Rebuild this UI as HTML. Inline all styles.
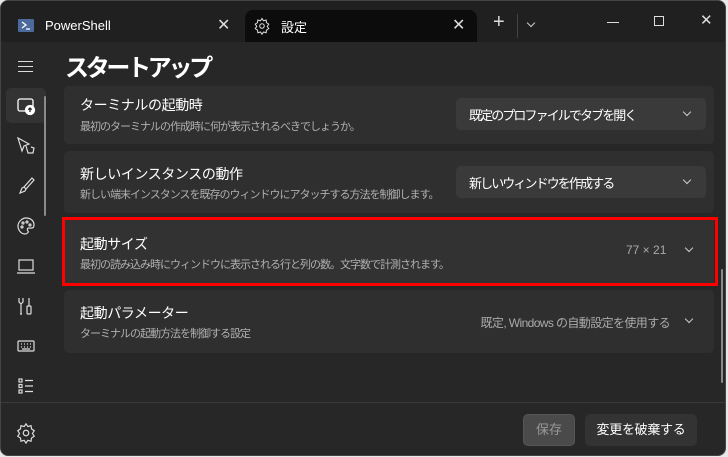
<!DOCTYPE html>
<html><head><meta charset="utf-8"><style>
*{box-sizing:border-box;margin:0;padding:0}
body{width:728px;height:457px;background:#e8e8e8;font-family:"Liberation Sans","Noto Sans CJK JP",sans-serif;overflow:hidden;position:relative}
.win{position:absolute;left:0;top:0;width:726px;height:456px;background:#272727;border-radius:8px;overflow:hidden;border:1px solid #444}
.title{position:absolute;left:0;top:0;width:100%;height:41px;background:#202020}
.tab{position:absolute;top:9px;height:32px;color:#fff;font-size:13px}
.abs{position:absolute}
.card{position:absolute;left:63px;width:650px;background:#2f2f2f;border-radius:5px}
.t1{position:absolute;left:16px;color:#fff;font-size:14px;letter-spacing:-0.4px;white-space:nowrap}
.t2{position:absolute;left:16px;color:#b0b0b0;font-size:11px;letter-spacing:-1.0px;white-space:nowrap}
.dd{position:absolute;left:392px;width:250px;height:32px;background:#3a3a3a;border-radius:5px;color:#fff;font-size:13px;letter-spacing:-1.9px;padding:7px 13px;white-space:nowrap}
.chev{position:absolute;width:6px;height:6px;border-right:1.3px solid #ccc;border-bottom:1.3px solid #ccc;transform:rotate(45deg)}
.ic{position:absolute;left:14px;width:22px;height:22px}
</style></head><body>
<div class="win">
<div class="title"></div>
<div class="tab" style="left:0;width:244px">
 <svg class="abs" style="left:17px;top:9px" width="16" height="13"><rect width="16" height="13" rx="1" fill="#4c6a9c"/><path d="M4 3l4 3-4 3M8 10h4" stroke="#fff" stroke-width="1.3" fill="none"/></svg>
 <span class="abs" style="left:44px;top:8px">PowerShell</span>
 <span class="abs" style="left:216px;top:5px;font-size:16px;color:#ddd">✕</span>
</div>
<div class="tab" style="left:244px;width:232px;background:#0c0c0c;border-radius:8px 8px 0 0">
 <svg class="abs" style="left:8px;top:7px" width="18" height="18" viewBox="0 0 24 24" fill="none" stroke="#ddd" stroke-width="1.4"><circle cx="12" cy="12" r="3"/><path d="M12 2l2 3 3.5-1 .5 3.5 3 2-2 3 2 3-3 2-.5 3.5-3.5-1-2 3-2-3-3.5 1-.5-3.5-3-2 2-3-2-3 3-2 .5-3.5 3.5 1z"/></svg>
 <span class="abs" style="left:36px;top:7px">設定</span>
 <span class="abs" style="left:207px;top:5px;font-size:16px;color:#ddd">✕</span>
</div>
<span class="abs" style="left:492px;top:11px;color:#ddd;font-size:20px;line-height:20px">+</span>
<div class="abs" style="left:516px;top:13px;width:1px;height:24px;background:#444"></div>
<div class="chev" style="left:527px;top:19px;border-color:#ccc"></div>
<div class="abs" style="left:606px;top:21px;width:12px;height:1px;background:#ddd"></div>
<div class="abs" style="left:653px;top:15px;width:10px;height:10px;border:1px solid #ddd"></div>
<span class="abs" style="left:699px;top:10px;color:#ddd;font-size:15px">✕</span>

<div class="abs" style="left:17px;top:60px;width:15px;height:11px;border-top:1.3px solid #ddd;border-bottom:1.3px solid #ddd"></div>
<div class="abs" style="left:17px;top:65px;width:15px;height:1.3px;background:#ddd"></div>
<div class="abs" style="left:5px;top:87px;width:40px;height:35px;background:#333;border-radius:5px"></div>
<div class="abs" style="left:43px;top:95px;width:2px;height:120px;background:#8a8a8a;border-radius:1px"></div>
<svg class="ic" style="top:94px" viewBox="0 0 22 22" fill="none" stroke="#fff" stroke-width="1.3"><rect x="3" y="4" width="15" height="12" rx="2"/><circle cx="15" cy="15" r="4.5" fill="#fff"/><path d="M15 17v-4m-1.7 1.7L15 13l1.7 1.7" stroke="#272727"/></svg>
<svg class="ic" style="top:134px" viewBox="0 0 22 22" fill="none" stroke="#ddd" stroke-width="1.2"><path d="M3 3l4 13 2-5 5-2z"/><path d="M11 11l2 7h5l1-5-3-1"/></svg>
<svg class="ic" style="top:174px" viewBox="0 0 22 22" fill="none" stroke="#ddd" stroke-width="1.2"><path d="M17 3l2 2-8 9-2-2z"/><path d="M9 12l-2 1-2 5 5-2 1-2"/></svg>
<svg class="ic" style="top:214px" viewBox="0 0 22 22" fill="none" stroke="#ddd" stroke-width="1.2"><path d="M11 3c5 0 8 3 8 7s-3 3-5 3-2 2-1 3-1 3-3 3c-4 0-7-4-7-8s4-8 8-8z"/><circle cx="8" cy="8" r="1"/><circle cx="12" cy="7" r="1"/><circle cx="15" cy="10" r="1"/><circle cx="7" cy="12" r="1"/></svg>
<svg class="ic" style="top:254px" viewBox="0 0 22 22" fill="none" stroke="#ddd" stroke-width="1.2"><rect x="4" y="5" width="14" height="10"/><path d="M2 18h18"/></svg>
<svg class="ic" style="top:294px" viewBox="0 0 22 22" fill="none" stroke="#ddd" stroke-width="1.2"><path d="M4 3v4l2 2 2-2V3M6 9v10M5 19h2"/><rect x="12" y="11" width="4" height="8" rx="1"/><path d="M14 3v8"/></svg>
<svg class="ic" style="top:334px" viewBox="0 0 22 22" fill="none" stroke="#ddd" stroke-width="1.2"><rect x="3" y="6" width="16" height="10" rx="1"/><path d="M6 9h1M9 9h1M12 9h1M15 9h1M6 12h1M9 12h1M12 12h1M15 12h1M7 14h8"/></svg>
<svg class="ic" style="top:374px" viewBox="0 0 22 22" fill="none" stroke="#ddd" stroke-width="1.2"><rect x="4" y="4" width="3" height="3"/><rect x="4" y="9.5" width="3" height="3"/><rect x="4" y="15" width="3" height="3"/><path d="M10 5.5h8M10 11h8M10 16.5h8"/></svg>
<div class="abs" style="left:0;top:401px;width:728px;height:1px;background:#3a3a3a"></div>
<svg class="ic" style="top:421px" viewBox="0 0 24 24" fill="none" stroke="#ddd" stroke-width="1.3"><circle cx="12" cy="12" r="3"/><path d="M12 2l2 3 3.5-1 .5 3.5 3 2-2 3 2 3-3 2-.5 3.5-3.5-1-2 3-2-3-3.5 1-.5-3.5-3-2 2-3-2-3 3-2 .5-3.5 3.5 1z"/></svg>

<div class="abs" style="left:64px;top:47px;color:#fff;font-size:24px;letter-spacing:-3.3px;font-weight:bold">スタートアップ</div>

<div class="card" style="top:85px;height:58px">
 <div class="t1" style="top:9px">ターミナルの起動時</div>
 <div class="t2" style="top:32px">最初のターミナルの作成時に何が表示されるべきでしょうか。</div>
 <div class="dd" style="top:12px">既定のプロファイルでタブを開く<div class="chev" style="right:16px;top:11px"></div></div>
</div>
<div class="card" style="top:150px;height:62px">
 <div class="t1" style="top:13px">新しいインスタンスの動作</div>
 <div class="t2" style="top:35px">新しい端末インスタンスを既存のウィンドウにアタッチする方法を制御します。</div>
 <div class="dd" style="top:15px">新しいウィンドウを作成する<div class="chev" style="right:16px;top:11px"></div></div>
</div>
<div class="card" style="top:219px;height:63px;background:#323232;border-radius:0">
 <div class="t1" style="top:14px">起動サイズ</div>
 <div class="t2" style="top:36px">最初の読み込み時にウィンドウに表示される行と列の数。文字数で計測されます。</div>
 <div class="abs" style="left:562px;top:23px;color:#aaa;font-size:12px">77 × 21</div>
 <div class="chev" style="left:622px;top:25px"></div>
</div>
<div class="abs" style="left:61px;top:216px;width:656px;height:69px;border:3px solid #f00"></div>
<div class="card" style="top:289px;height:63px">
 <div class="t1" style="top:13px">起動パラメーター</div>
 <div class="t2" style="top:35px">ターミナルの起動方法を制御する設定</div>
 <div class="abs" style="right:44px;top:24px;color:#aaa;font-size:12px;letter-spacing:-0.6px;white-space:nowrap">既定, Windows の自動設定を使用する</div>
 <div class="chev" style="left:622px;top:26px"></div>
</div>
<div class="abs" style="left:720px;top:268px;width:2px;height:114px;background:#8a8a8a;border-radius:1px"></div>

<div class="abs" style="left:522px;top:413px;width:52px;height:32px;background:#4a4a4a;border:1px solid #555;border-radius:5px;color:#999;font-size:13px;text-align:center;line-height:30px">保存</div>
<div class="abs" style="left:584px;top:413px;width:112px;height:32px;background:#333;border-radius:5px;color:#fff;font-size:13px;letter-spacing:-0.3px;text-align:center;line-height:32px">変更を破棄する</div>
</div>
</body></html>
